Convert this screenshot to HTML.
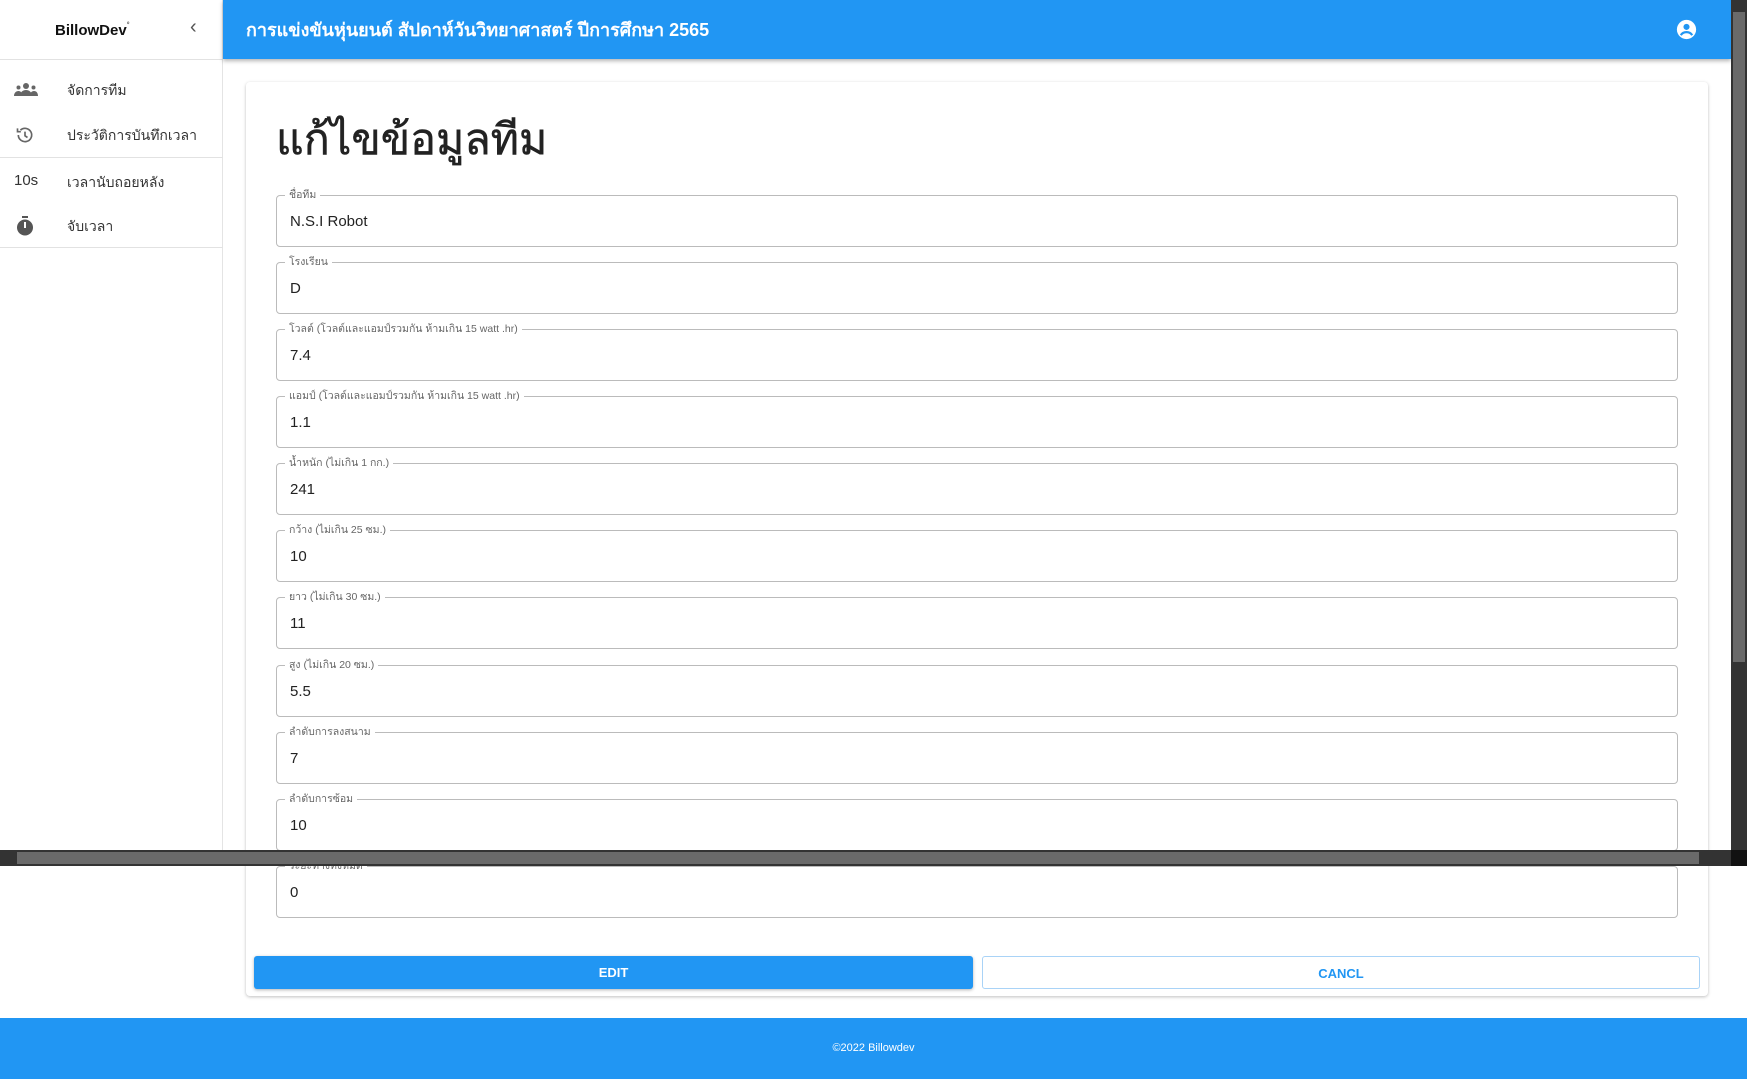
<!DOCTYPE html><html><head><meta charset="utf-8"><style>
*{box-sizing:border-box;margin:0;padding:0}
body{width:1747px;height:1079px;position:relative;overflow:hidden;background:#fff;font-family:"Liberation Sans","Noto Sans CJK SC",sans-serif;color:#222}
.abs{position:absolute}
.hdr{left:223px;top:0;width:1508px;height:59px;background:#2196f3;box-shadow:0 2px 4px rgba(0,0,0,.3);color:#fff;font-size:18px;font-weight:bold;line-height:60px;padding-left:23px}
.side{left:0;top:0;width:223px;height:850px;border-right:1px solid #e4e4e4;background:#fff}
.item{position:absolute;left:0;width:223px;font-size:14px;color:#333}
.item span{position:absolute;left:67px}
.div{position:absolute;left:0;width:223px;height:1px;background:#e2e2e2}
.card{left:246px;top:82px;width:1462px;height:914px;border-radius:4px;box-shadow:0 1px 3px rgba(0,0,0,.25);background:#fff}
.f{position:absolute;left:276px;width:1402px;height:52px;border:1px solid #bbb;border-radius:4px}
.f label{position:absolute;left:8px;top:-8px;background:#fff;padding:0 4px;font-size:10.5px;color:#666;line-height:14px}
.f div{position:absolute;left:13px;top:17px;font-size:15px;color:#222}
.btn{position:absolute;top:956px;height:33px;border-radius:3px;font-size:13px;font-weight:bold;text-align:center;line-height:33px}
</style></head><body>
<div class="abs side">
<div class="abs" style="left:55px;top:22px;font-size:15px;font-weight:bold;color:#111">BillowDev<span style="font-size:7px;vertical-align:top;color:#555">°</span></div>
<div class="abs" style="left:190px;top:16px;font-size:20px;color:#555">‹</div>
<div class="div" style="top:59px"></div>
<div class="item" style="top:80px"><svg class="abs" style="left:14px;top:2px" width="24" height="14" viewBox="0 0 24 14" fill="#666"><circle cx="12" cy="4" r="3"/><circle cx="4.5" cy="5.5" r="2"/><circle cx="19.5" cy="5.5" r="2"/><path d="M6 14c0-4 3-6 6-6s6 2 6 6z M0 14c0-3 2-5 4.5-5S8 11 8 14z M16 14c0-3 1.5-5 4-5s4 2 4 5z"/></svg><span>จัดการทีม</span></div>
<div class="item" style="top:125px"><svg class="abs" style="left:15px;top:0px" width="20" height="20" viewBox="0 0 24 24" fill="none" stroke="#666" stroke-width="2"><path d="M4 12a8 8 0 1 0 2.5-5.8"/><path d="M3 4v4h4" /><path d="M12 8v5l3 2"/></svg><span>ประวัติการบันทึกเวลา</span></div>
<div class="div" style="top:157px"></div>
<div class="item" style="top:172px"><b style="position:absolute;left:14px;font-weight:normal;font-size:15px">10s</b><span>เวลานับถอยหลัง</span></div>
<div class="item" style="top:216px"><svg class="abs" style="left:16px;top:0" width="18" height="20" viewBox="0 0 18 20" fill="#555"><rect x="6" y="0" width="6" height="2"/><circle cx="9" cy="11.5" r="8"/><rect x="8" y="6" width="2" height="6" fill="#fff"/></svg><span>จับเวลา</span></div>
<div class="div" style="top:247px"></div>
</div>
<div class="abs hdr">การแข่งขันหุ่นยนต์ สัปดาห์วันวิทยาศาสตร์ ปีการศึกษา 2565</div>
<svg class="abs" style="left:1676px;top:19px" width="21" height="21" viewBox="0 0 24 24"><circle cx="12" cy="12" r="11" fill="#fff"/><circle cx="12" cy="9" r="3.5" fill="#2196f3"/><path d="M5.5 18.5c1.5-2.5 4-3.5 6.5-3.5s5 1 6.5 3.5" stroke="#2196f3" stroke-width="2.5" fill="none"/></svg>
<div class="abs card"></div>
<div class="abs" style="left:276px;top:112px;font-size:43px;color:#222;line-height:56px;-webkit-text-stroke:0.5px #222">แก้ไขข้อมูลทีม</div>
<div class="f" style="top:195px"><label>ชื่อทีม</label><div>N.S.I Robot</div></div>
<div class="f" style="top:262px"><label>โรงเรียน</label><div>D</div></div>
<div class="f" style="top:329px"><label>โวลต์ (โวลต์และแอมป์รวมกัน ห้ามเกิน 15 watt .hr)</label><div>7.4</div></div>
<div class="f" style="top:396px"><label>แอมป์ (โวลต์และแอมป์รวมกัน ห้ามเกิน 15 watt .hr)</label><div>1.1</div></div>
<div class="f" style="top:463px"><label>น้ำหนัก (ไม่เกิน 1 กก.)</label><div>241</div></div>
<div class="f" style="top:530px"><label>กว้าง (ไม่เกิน 25 ซม.)</label><div>10</div></div>
<div class="f" style="top:597px"><label>ยาว (ไม่เกิน 30 ซม.)</label><div>11</div></div>
<div class="f" style="top:665px"><label>สูง (ไม่เกิน 20 ซม.)</label><div>5.5</div></div>
<div class="f" style="top:732px"><label>ลำดับการลงสนาม</label><div>7</div></div>
<div class="f" style="top:799px"><label>ลำดับการซ้อม</label><div>10</div></div>
<div class="f" style="top:866px"><label>ระยะทางทั้งหมด</label><div>0</div></div>
<div class="btn" style="left:254px;width:719px;background:#2196f3;color:#fff;box-shadow:0 1px 3px rgba(0,0,0,.3)">EDIT</div>
<div class="btn" style="left:982px;width:718px;border:1px solid #a9d3f7;color:#2196f3">CANCL</div>
<div class="abs" style="left:0;top:1018px;width:1747px;height:61px;background:#2196f3;color:#fff;font-size:11px;text-align:center;line-height:60px">©2022 Billowdev</div>
<div class="abs" style="left:1731px;top:0;width:16px;height:850px;background:#333"><div class="abs" style="left:2px;top:12px;width:12px;height:650px;background:#6a6a6a"></div></div>
<div class="abs" style="left:0;top:850px;width:1747px;height:16px;background:#333"><div class="abs" style="left:17px;top:2px;width:1682px;height:12px;background:#6a6a6a"></div><div class="abs" style="left:1731px;top:0;width:16px;height:16px;background:#111"></div></div>
</body></html>
